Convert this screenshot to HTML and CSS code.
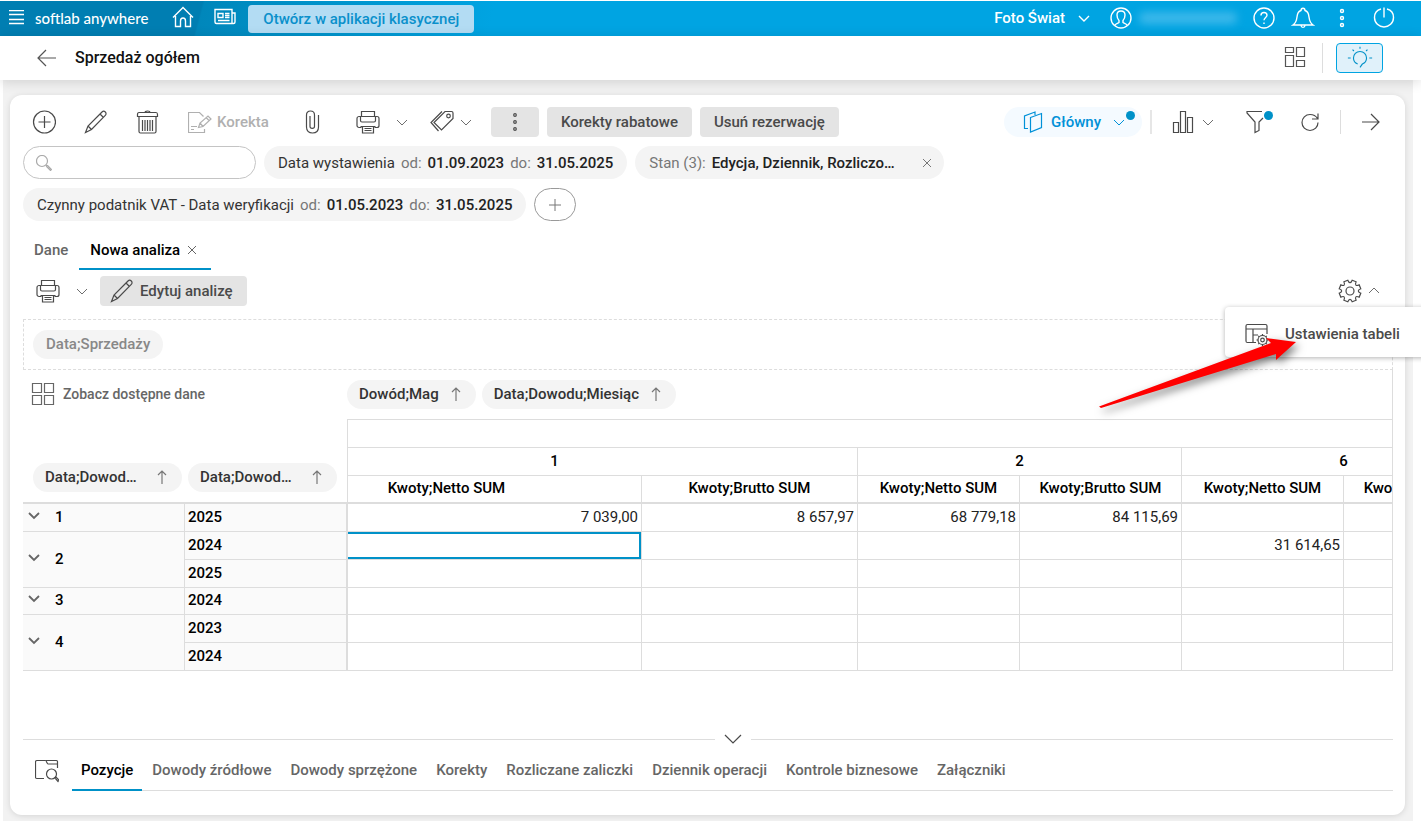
FILE: index.html
```html
<!DOCTYPE html>
<html lang="pl">
<head>
    <meta charset="UTF-8">
    <meta name="viewport" content="width=device-width, initial-scale=1.0">
    <title>Sprzedaż ogółem</title>
    <link rel="stylesheet" href="styles.css">
</head>
<body>
    <svg class="sprite" aria-hidden="true">
        <symbol id="chevron" viewBox="0 0 12 12"><path d="M1 4l5 5 5-5"/></symbol>
        <symbol id="close" viewBox="0 0 12 12"><path d="M2 2l8 8M10 2l-8 8"/></symbol>
        <symbol id="arrow-up" viewBox="0 0 12 16"><path d="M6 15V2M2 6l4-4 4 4"/></symbol>
        <symbol id="pencil" viewBox="0 0 24 24"><path d="M1.500 22.500l2.500-6.500L18 2c1-1 2.300-1 3.300 0s1 2.300 0 3.300L7.500 19.500zM4 16l3.500 3.500M16 4l3.500 3.500"/></symbol>
        <symbol id="printer" viewBox="0 0 24 24"><path d="M5.500 6V1.500h13V6M5.500 17.500H3c-1 0-2-1-2-2V8.500c0-1 1-2 2-2h1.500v4c0 .8.700 1.500 1.500 1.500h12c.8 0 1.500-.7 1.500-1.500v-4H21c1 0 2 1 2 2v7c0 1-1 2-2 2h-2.500M4.500 6.500h15M6.500 16.500h11v6.500h-11zM4.500 16.500h15M8.500 18.500h7M8.500 20.500h7"/></symbol>
    </svg>

    <header class="topbar">
        <button class="icon-btn" aria-label="Menu">
            <svg class="icon-16" viewBox="0 0 16 16"><path d="M0 .500h15M0 4.500h15M0 9.500h15M0 13.500h15"/></svg>
        </button>
        <span class="brand">softlab anywhere</span>
        <button class="icon-btn home" aria-label="Start">
            <svg class="icon-24" viewBox="0 0 24 24"><path d="M2 11.500L12 1.500l10 10M4.500 10v10.500h5V15c0-2 1-3 2.500-3s2.500 1 2.500 3v5.500h5V10"/></svg>
        </button>
        <button class="icon-btn news" aria-label="Aktualności">
            <svg class="icon-24" viewBox="0 0 24 24"><path d="M2 3.500h17v14H3.500c-1 0-1.500-.5-1.500-1.500zM19 7h3v9c0 1-.5 1.500-1.500 1.500H19M5 7.500h5v4H5zM12 7.500h4.500M12 9.500h4.500M12 11.500h4.500M5 14.500h11.500"/></svg>
        </button>
        <button class="classic-btn">Otwórz w aplikacji klasycznej</button>
        <div class="topbar-right">
            <button class="company">Foto Świat <svg class="icon-12"><use href="#chevron"/></svg></button>
            <button class="icon-btn user" aria-label="Użytkownik">
                <svg class="icon-24" viewBox="0 0 24 24"><circle cx="12" cy="12" r="10"/><path d="M5.500 19.500c1-2 3-2 4.500-3v-2C8.500 13 8 11 8 9c0-2.500 1.500-4 4-4s4 1.500 4 4c0 2-.5 4-2 5.500v2c1.500 1 3.500 1 4.500 3"/></svg>
                <span class="user-name"></span>
            </button>
            <button class="icon-btn" aria-label="Pomoc">
                <svg class="icon-24" viewBox="0 0 24 24"><circle cx="12" cy="12" r="10"/><path d="M9 9.500C9 7.500 10.200 6.500 12 6.500s3 1 3 2.800c0 2.200-3 2.200-3 5M12 16.500v1.500"/></svg>
            </button>
            <button class="icon-btn bell" aria-label="Powiadomienia">
                <svg class="icon-24" viewBox="0 0 24 24"><path d="M2 19h20c-3-2-3.500-4-4-8-.4-4-2-6-4-6.500 0-3-4-3-4 0C8 5 6.400 7 6 11c-.5 4-1 6-4 8zM10 19.500c.3 2.500 3.700 2.500 4 0"/></svg>
            </button>
            <button class="icon-btn" aria-label="Więcej">
                <svg class="icon-24" viewBox="0 0 24 24"><circle cx="12" cy="5" r="1.500"/><circle cx="12" cy="12" r="1.500"/><circle cx="12" cy="19" r="1.500"/></svg>
            </button>
            <button class="icon-btn power" aria-label="Wyloguj">
                <svg class="icon-24" viewBox="0 0 24 24"><path d="M9 3c-4 1-6.500 4.500-6.500 8.500 0 5.500 4.500 9.500 9.500 9.500s9.500-4 9.500-9.500C21.500 7.500 19 4 15 3M12 1.500v10"/></svg>
            </button>
        </div>
    </header>

    <div class="page-head">
        <button class="icon-btn back" aria-label="Wstecz">
            <svg class="icon-24" viewBox="0 0 24 24"><path d="M21 12H3M11 4l-8 8 8 8"/></svg>
        </button>
        <h1>Sprzedaż ogółem</h1>
        <button class="icon-btn layout" aria-label="Układ">
            <svg class="icon-24" viewBox="0 0 24 24"><path d="M2.500 1.500h8v5h-8zM13.500 1.500h8v9h-8zM2.500 9.500h8v11h-8zM13.500 14.500h8v6h-8z"/></svg>
        </button>
        <button class="tips" aria-label="Wskazówki">
            <svg class="tips-icon" viewBox="0 0 30 24"><path d="M12.500 18.500c-2.500-1-4.500-3.500-4.500-6.500 0-4 3-7 7-7s7 3 7 7c0 3-2 5.500-4.500 6.500L15 22M15 0v2M7 3l1.500 1.500M23 3l-1.500 1.500M2 12h3M25 12h3"/></svg>
        </button>
    </div>

    <main class="workspace">
        <div class="card">
            <div class="toolbar">
                <div class="tools">
                    <button class="icon-btn" aria-label="Dodaj">
                        <svg class="icon-24" viewBox="0 0 24 24"><circle cx="12.500" cy="12" r="11"/><path d="M12.500 6v12M6.500 12h12"/></svg>
                    </button>
                    <button class="icon-btn" aria-label="Edytuj"><svg class="icon-24"><use href="#pencil"/></svg></button>
                    <button class="icon-btn" aria-label="Usuń">
                        <svg class="icon-24" viewBox="0 0 24 24"><path d="M9 2.500c0-2 5-2 5 0M3 2.500h17c1 0 1.500 1 1.500 2v2h-20v-2c0-1 .5-2 1.500-2zM3 6.500v15c0 1 .5 1.500 1.500 1.500h14c1 0 1.500-.5 1.500-1.500v-15M6.500 10v11M9 10v11M11.500 10v11M14 10v11M16.500 10v11"/></svg>
                    </button>
                    <button class="icon-btn korekta" disabled>
                        <svg class="icon-24" viewBox="0 0 24 24"><path d="M16.500 19v3.500H.500v-20h11l4 4M3 16.500h6M3 19.500h3M10.500 17.500l1.500-4.500 8-7 3 3-8 7.500zM12 13l3 3.500M18 7.500l3 3"/></svg>
                        Korekta
                    </button>
                </div>
                <button class="icon-btn attach" aria-label="Załącz">
                    <svg class="icon-24" viewBox="0 0 24 24"><path d="M18.500 5v12c0 4-2.500 6-6 6s-6-2-6-6V5c0-2.500 1.500-4 4-4s4 1.500 4 4v11.500c0 2.500-4.500 2.500-4.500 0V6"/></svg>
                </button>
                <button class="icon-btn print" aria-label="Drukuj">
                    <svg class="icon-24"><use href="#printer"/></svg>
                    <svg class="icon-12"><use href="#chevron"/></svg>
                </button>
                <button class="icon-btn tags" aria-label="Etykiety">
                    <svg class="icon-24" viewBox="0 0 24 24"><path d="M15 1.500h6.500c1 0 1.500.5 1.500 1.500v5.500L11.500 20 4 12.500zM12 1.500l-11 11L8.500 21"/><circle cx="18.500" cy="6" r="1.800"/></svg>
                    <svg class="icon-12"><use href="#chevron"/></svg>
                </button>
                <div class="actions">
                    <button class="btn btn-more" aria-label="Więcej">
                        <svg class="icon-24" viewBox="0 0 24 24"><circle cx="12" cy="5" r="1.300"/><circle cx="12" cy="12" r="1.300"/><circle cx="12" cy="19" r="1.300"/></svg>
                    </button>
                    <button class="btn">Korekty rabatowe</button>
                    <button class="btn">Usuń rezerwację</button>
                </div>
                <div class="tools-right">
                    <button class="view-btn">
                        <svg class="icon-24" viewBox="0 0 24 24"><path d="M9.500 7.500l11-4v14l-11 4.500zM7 18.500H3.500V6l10.500-4v3"/></svg>
                        Główny
                        <svg class="icon-12"><use href="#chevron"/></svg>
                        <span class="dot"></span>
                    </button>
                    <button class="icon-btn chart" aria-label="Wykresy">
                        <svg class="icon-24" viewBox="0 0 24 24"><path d="M1.500 12.500h5v10h-5zM8.500 1.500h5v21h-5zM15.500 7.500h5v15h-5z"/></svg>
                        <svg class="icon-12"><use href="#chevron"/></svg>
                    </button>
                    <button class="icon-btn filter" aria-label="Filtr">
                        <svg class="icon-24" viewBox="0 0 24 24"><path d="M16 1.500H1V3l8 9v10.500l4-2V12l4-4"/></svg>
                        <span class="dot"></span>
                    </button>
                    <button class="icon-btn" aria-label="Odśwież">
                        <svg class="icon-24" viewBox="0 0 24 24"><path d="M20 12.500c0 4.500-3.500 8-8 8s-8-3.500-8-8 3.500-8 8-8c3.500 0 6 1.500 7.500 4M20 3.500v5.500h-6"/></svg>
                    </button>
                    <button class="icon-btn next" aria-label="Dalej">
                        <svg class="icon-24" viewBox="0 0 24 24"><path d="M3 12h17M12 4l8 8-8 8"/></svg>
                    </button>
                </div>
            </div>

            <div class="filters">
                <label class="search">
                    <svg class="icon-16" viewBox="0 0 16 16"><circle cx="6" cy="6" r="5.500"/><path d="M10 10l1.500 1.500M11.500 10.500l4 4-1 1-4-4z"/></svg>
                    <input type="text" aria-label="Szukaj">
                </label>
                <button class="pill">Data wystawienia <span>od:</span> <b>01.09.2023</b> <span>do:</span> <b>31.05.2025</b></button>
                <button class="pill pill-state"><span>Stan (3):</span> <b>Edycja, Dziennik, Rozliczo…</b> <svg class="icon-12"><use href="#close"/></svg></button>
                <button class="pill">Czynny podatnik VAT - Data weryfikacji <span>od:</span> <b>01.05.2023</b> <span>do:</span> <b>31.05.2025</b></button>
                <button class="pill-add" aria-label="Dodaj filtr">
                    <svg class="icon-12" viewBox="0 0 12 12"><path d="M6 0v12M0 6h12"/></svg>
                </button>
            </div>

            <div class="tabs">
                <button class="tab">Dane</button>
                <button class="tab active">Nowa analiza <svg class="icon-12"><use href="#close"/></svg></button>
            </div>

            <div class="analysis-bar">
                <button class="icon-btn print-analysis" aria-label="Drukuj analizę">
                    <svg class="icon-24"><use href="#printer"/></svg>
                    <svg class="icon-12"><use href="#chevron"/></svg>
                </button>
                <button class="btn btn-edit"><svg class="icon-24"><use href="#pencil"/></svg> Edytuj analizę</button>
                <div class="settings">
                    <button class="icon-btn" aria-label="Ustawienia">
                        <svg class="icon-24" viewBox="0 0 24 24"><circle cx="12" cy="12" r="4"/><path d="M22.800 14.200L21.200 18.100Q18.500 17 17.900 17.900Q17 18.500 18.100 21.200L14.200 22.800Q13.200 20.300 12 20.300Q10.800 20.300 9.800 22.800L5.900 21.200Q7 18.500 6.100 17.900Q5.500 17 2.800 18.100L1.200 14.200Q3.700 13.200 3.700 12Q3.700 10.800 1.200 9.800L2.800 5.900Q5.500 7 6.100 6.100Q7 5.500 5.900 2.800L9.800 1.200Q10.800 3.700 12 3.700Q13.200 3.700 14.200 1.200L18.100 2.800Q17 5.500 17.900 6.100Q18.500 7 21.200 5.900L22.800 9.800Q20.300 10.800 20.300 12Q20.300 13.200 22.800 14.200z"/></svg>
                        <svg class="icon-12 up"><use href="#chevron"/></svg>
                    </button>
                    <div class="menu">
                        <button class="menu-item">
                            <svg class="icon-24" viewBox="0 0 24 24"><path d="M11 20.500H2.500c-1 0-1.500-.5-1.500-1.500V4c0-1 .5-1.500 1.500-1.500h18c1 0 1.500.5 1.500 1.500v8M1 7h21M8 7v13.500M8 13h5"/><circle cx="17.500" cy="18" r="4.500"/><circle cx="17.500" cy="18" r="1.800"/><path d="M17.500 12v1.500M17.500 22.500V24M11.500 18H13M22 18h1.500M13.300 13.800l1 1M20.700 21.200l1 1M13.300 22.200l1-1M20.700 14.800l1-1"/></svg>
                            Ustawienia tabeli
                        </button>
                    </div>
                    <svg class="pointer" viewBox="0 0 200 70" aria-hidden="true"><polygon points="0,66.500 172,3 167,-2 197,2 177,20 177,14 2,68"/></svg>
                </div>
            </div>

            <div class="filter-zone">
                <span class="chip chip-muted">Data;Sprzedaży</span>
            </div>

            <div class="pivot">
                <div class="pivot-fields">
                    <button class="show-fields">
                        <svg class="icon-24" viewBox="0 0 24 24"><path d="M1.500 1.500h9v9h-9zM13.500 1.500h9v9h-9zM1.500 13.500h9v9h-9zM13.500 13.500h9v9h-9z"/></svg>
                        Zobacz dostępne dane
                    </button>
                    <button class="chip">Dowód;Mag <svg class="sort"><use href="#arrow-up"/></svg></button>
                    <button class="chip">Data;Dowodu;Miesiąc <svg class="sort"><use href="#arrow-up"/></svg></button>
                </div>
                <table class="grid">
                    <colgroup>
                        <col class="c-row"><col class="c-year"><col class="c-wide"><col class="c-mid"><col class="c-val"><col class="c-val"><col class="c-val"><col class="c-val">
                    </colgroup>
                    <thead>
                        <tr>
                            <td class="corner" colspan="2" rowspan="3">
                                <div class="row-fields">
                                    <button class="chip">Data;Dowod… <svg class="sort"><use href="#arrow-up"/></svg></button>
                                    <button class="chip">Data;Dowod… <svg class="sort"><use href="#arrow-up"/></svg></button>
                                </div>
                            </td>
                            <th class="top" colspan="6"></th>
                        </tr>
                        <tr>
                            <th class="shifted" colspan="2">1</th>
                            <th colspan="2">2</th>
                            <th colspan="2">6</th>
                        </tr>
                        <tr class="measures">
                            <th class="shifted">Kwoty;Netto SUM</th>
                            <th>Kwoty;Brutto SUM</th>
                            <th>Kwoty;Netto SUM</th>
                            <th>Kwoty;Brutto SUM</th>
                            <th>Kwoty;Netto SUM</th>
                            <th>Kwoty;Brutto SUM</th>
                        </tr>
                    </thead>
                    <tbody>
                        <tr>
                            <th class="row-head"><button aria-label="Rozwiń"><svg class="icon-12"><use href="#chevron"/></svg></button>1</th>
                            <th class="year">2025</th>
                            <td>7 039,00</td><td>8 657,97</td><td>68 779,18</td><td>84 115,69</td><td></td><td></td>
                        </tr>
                        <tr>
                            <th class="row-head" rowspan="2"><button aria-label="Rozwiń"><svg class="icon-12"><use href="#chevron"/></svg></button>2</th>
                            <th class="year">2024</th>
                            <td class="selected"></td><td></td><td></td><td></td><td>31 614,65</td><td></td>
                        </tr>
                        <tr>
                            <th class="year">2025</th>
                            <td></td><td></td><td></td><td></td><td></td><td></td>
                        </tr>
                        <tr class="single">
                            <th class="row-head"><button aria-label="Rozwiń"><svg class="icon-12"><use href="#chevron"/></svg></button>3</th>
                            <th class="year">2024</th>
                            <td></td><td></td><td></td><td></td><td></td><td></td>
                        </tr>
                        <tr>
                            <th class="row-head" rowspan="2"><button aria-label="Rozwiń"><svg class="icon-12"><use href="#chevron"/></svg></button>4</th>
                            <th class="year">2023</th>
                            <td></td><td></td><td></td><td></td><td></td><td></td>
                        </tr>
                        <tr>
                            <th class="year">2024</th>
                            <td></td><td></td><td></td><td></td><td></td><td></td>
                        </tr>
                    </tbody>
                </table>
            </div>

            <div class="details">
                <div class="splitter">
                    <button class="icon-btn" aria-label="Zwiń">
                        <svg viewBox="0 0 18 10"><path d="M1 1l8 8 8-8"/></svg>
                    </button>
                </div>
                <div class="details-bar">
                    <button class="icon-btn" aria-label="Podgląd">
                        <svg class="icon-24" viewBox="0 0 24 24"><path d="M9 19.500H2c-1 0-1.500-.5-1.500-1.500V3c0-.8.500-1.500 1.500-1.500h8.500c1 0 1.500 3.500 2.500 3.500h9.500v4M11 1.500h10.500c.6 0 1 .4 1 1V5"/><circle cx="16.500" cy="15" r="5"/><path d="M20 19l1-1 3 3-1 1.500z"/></svg>
                    </button>
                    <div class="detail-tabs">
                        <button class="tab active">Pozycje</button>
                        <button class="tab">Dowody źródłowe</button>
                        <button class="tab">Dowody sprzężone</button>
                        <button class="tab">Korekty</button>
                        <button class="tab">Rozliczane zaliczki</button>
                        <button class="tab">Dziennik operacji</button>
                        <button class="tab">Kontrole biznesowe</button>
                        <button class="tab">Załączniki</button>
                    </div>
                </div>
            </div>
        </div>
    </main>
</body>
</html>
```
FILE: styles.css
```css
* {
    box-sizing: border-box;
}
body {
    margin: 0;
    padding-top: 1px;
    overflow-x: hidden;
    background-color: #fff;
    color: #333;
    font-family: Roboto, "Open Sans", sans-serif;
    font-size: 15px;
    line-height: 20px;
}
button {
    display: flex;
    align-items: center;
    padding: 0;
    border: 0;
    background: none;
    color: inherit;
    font: inherit;
    font-weight: 500;
    white-space: nowrap;
    cursor: pointer;
}
svg {
    display: block;
    flex: none;
    fill: none;
    stroke: currentColor;
    stroke-width: 1.2;
}
.sprite {
    display: none;
}
.icon-24 {
    width: 24px;
    height: 24px;
}
.icon-16 {
    width: 16px;
    height: 16px;
}
.icon-12 {
    width: 12px;
    height: 12px;
    stroke-width: 1;
}
.icon-btn .icon-12 {
    opacity: 0.8;
}
.dot {
    position: absolute;
    top: 4px;
    right: 7px;
    width: 9px;
    height: 9px;
    border-radius: 50%;
    background-color: #0091c8;
}

/* top bar */
.topbar {
    display: flex;
    align-items: center;
    height: 35px;
    padding: 0 25px 2px 9px;
    background: linear-gradient(105deg, #007eb2 0, #007eb2 196px, #0087bb 198px, #00a4e2 480px);
    color: #fff;
}
.topbar svg {
    stroke-width: 1.4;
}
.brand {
    margin-left: 10px;
    font-family: Lato, sans-serif;
    font-size: 15px;
    font-weight: 500;
}
.home {
    margin-left: 23px;
}
.news {
    margin-left: 18px;
}
.classic-btn {
    height: 28px;
    margin-top: 2px;
    margin-left: 11px;
    padding: 0 15px;
    border-radius: 4px;
    background-color: #b3dcf3;
    color: #0a90cb;
}
.topbar-right {
    display: flex;
    align-items: center;
    gap: 15px;
    margin-left: auto;
}
.company {
    gap: 13px;
    margin-right: 4px;
}
.user {
    gap: 6px;
}
.user-name {
    width: 98px;
    height: 12px;
    border-radius: 5px;
    background-color: #3cb8ea;
    filter: blur(4px);
}
.power {
    margin-left: 3px;
}

/* page header */
.page-head {
    position: relative;
    display: flex;
    align-items: center;
    height: 44px;
    padding: 0 38px 0 35px;
    background-color: #fff;
    box-shadow: 0 2px 12px rgba(0, 0, 0, 0.14);
    color: #555;
}
.page-head h1 {
    margin: 0 auto 0 16px;
    color: #111;
    font-size: 16px;
    font-weight: 500;
}
.layout {
    padding-right: 15px;
    border-right: 1px solid #ddd;
    height: 30px;
}
.tips {
    justify-content: center;
    width: 47px;
    height: 30px;
    margin-left: 13px;
    border: 1px solid #00a4e2;
    border-radius: 4px;
    background-color: #e0f1fa;
    color: #0091c8;
}
.tips-icon {
    width: 28px;
    height: 24px;
}

/* main card */
.workspace {
    margin-right: 8px;
    margin-left: 3px;
    padding: 15px 8px 6px 7px;
    background-color: #f2f2f2;
}
.card {
    display: flex;
    flex-direction: column;
    min-height: calc(100vh - 101px);
    padding: 12px 12px 24px 13px;
    border-radius: 12px;
    background-color: #fff;
    box-shadow: 0 1px 6px rgba(0, 0, 0, 0.12);
    color: #4a4a4a;
}
.toolbar {
    display: flex;
    align-items: center;
    height: 30px;
    padding-left: 9px;
}
.tools {
    display: flex;
    gap: 28px;
}
.korekta {
    gap: 5px;
    color: #b0b0b0;
}
.attach {
    margin-left: 31px;
}
.print {
    gap: 16px;
    margin-left: 32px;
}
.tags {
    gap: 6px;
    margin-left: 22px;
}
.actions {
    display: flex;
    gap: 8px;
    margin-left: 19px;
}
.btn {
    height: 30px;
    padding: 0 14px;
    border-radius: 4px;
    background-color: #e4e4e4;
}
.btn-more {
    justify-content: center;
    width: 48px;
}
.tools-right {
    display: flex;
    align-items: center;
    margin-left: auto;
    padding-right: 10px;
}
.view-btn {
    position: relative;
    height: 30px;
    gap: 6px;
    margin-right: 8px;
    padding: 0 17px 0 17px;
    border-radius: 15px;
    background-color: #f4faff;
    color: #0091d8;
}
.view-btn .icon-12 {
    margin-left: 6px;
}
.chart {
    gap: 6px;
    padding-left: 20px;
    border-left: 2px solid #e6e6e6;
}
.filter {
    position: relative;
    width: 32px;
    height: 30px;
    margin: 0 20px 0 32px;
}
.filter .dot {
    right: 5px;
}
.next {
    margin-left: 18px;
    padding-left: 18px;
    border-left: 1px solid #ddd;
}

/* filters */
.filters {
    display: flex;
    flex-wrap: wrap;
    gap: 9px 8px;
    margin-top: 9px;
}
.search {
    display: flex;
    align-items: center;
    gap: 8px;
    width: 233px;
    height: 33px;
    padding: 0 12px;
    border: 1px solid #c4c4c4;
    border-radius: 17px;
    color: #aaa;
}
.search input {
    flex: 1;
    min-width: 0;
    border: 0;
    outline: 0;
    background: none;
    font: inherit;
}
.pill {
    gap: 6px;
    height: 33px;
    padding: 0 14px;
    border-radius: 17px;
    background-color: #f4f4f4;
    color: #333;
    font-weight: 400;
}
.pill span {
    color: #777;
}
.pill b {
    color: #222;
    font-weight: 500;
}
.pill-state .icon-12 {
    margin-left: 20px;
    margin-right: -3px;
    color: #777;
}
.pill-add {
    justify-content: center;
    width: 42px;
    height: 33px;
    border: 1px solid #999;
    border-radius: 17px;
    color: #777;
}

/* tabs */
.tabs {
    display: flex;
    margin-top: 11px;
}
.tab {
    gap: 6px;
    height: 38px;
    padding: 0 11px;
    border-bottom: 2px solid transparent;
    color: #666;
}
.tab.active {
    border-bottom-color: #0091c8;
    color: #000;
}
.tab .icon-12 {
    margin-right: 2px;
    color: #666;
}

/* analysis */
.analysis-bar {
    display: flex;
    align-items: center;
    margin-top: 6px;
    padding: 0 13px;
}
.print-analysis {
    gap: 16px;
    margin-right: 12px;
}
.btn-edit {
    gap: 6px;
    padding: 0 14px 0 10px;
}
.settings {
    position: relative;
    margin-left: auto;
}
.settings .icon-btn {
    gap: 6px;
}
.up {
    transform: rotate(180deg);
}
.menu {
    position: absolute;
    z-index: 1;
    top: 28px;
    left: -113px;
    width: 200px;
    padding: 9px 0 7px;
    border-radius: 4px 0 0 4px;
    background-color: #fff;
    box-shadow: 0 1px 5px rgba(0, 0, 0, 0.3);
}
.menu-item {
    width: 100%;
    height: 34px;
    gap: 16px;
    padding: 2px 0 0 20px;
}
.pointer {
    position: absolute;
    z-index: 2;
    top: 61px;
    left: -239px;
    width: 200px;
    height: 70px;
    overflow: visible;
    fill: #f00;
    stroke: none;
    filter: drop-shadow(3px 4px 4px rgba(0, 0, 0, 0.5));
}
.filter-zone {
    display: flex;
    align-items: center;
    height: 51px;
    margin-top: 13px;
    padding-left: 9px;
    border: 1px dashed #ddd;
}
.chip {
    display: flex;
    align-items: center;
    gap: 11px;
    height: 29px;
    padding: 0 14px 2px 12px;
    border-radius: 15px;
    background-color: #f4f4f4;
    color: #333;
    font-weight: 500;
}
.chip-muted {
    padding-right: 13px;
    padding-left: 13px;
    color: #888;
}
.sort {
    width: 12px;
    height: 16px;
    color: #777;
}
.pivot {
    overflow: hidden;
    border-right: 1px solid #ddd;
}
.pivot-fields {
    display: flex;
    align-items: center;
    gap: 6px;
    height: 49px;
}
.show-fields {
    width: 318px;
    gap: 8px;
    padding: 0 0 2px 8px;
    color: #666;
    font-size: 14px;
}
.grid {
    width: 1483px;
    border-spacing: 0;
    table-layout: fixed;
    color: #000;
}
.c-row {
    width: 162px;
}
.c-year {
    width: 163px;
}
.c-wide {
    width: 294px;
}
.c-mid {
    width: 216px;
}
.c-val {
    width: 162px;
}
.grid th,
.grid td {
    height: 28px;
    padding: 0 3px 2px;
    border-right: 1px solid #ddd;
    border-bottom: 1px solid #ddd;
    font-weight: 500;
    text-align: center;
}
.grid tbody td {
    color: #222;
    font-weight: 400;
    text-align: right;
}
.grid .single th,
.grid .single td {
    height: 27px;
}
.grid .top {
    height: 29px;
    border-top: 1px solid #ddd;
}
.grid .shifted {
    padding-right: 99px;
}
.grid .measures th,
.grid .corner {
    border-bottom-width: 2px;
}
.grid .corner {
    padding: 0 10px 10px;
    vertical-align: bottom;
}
.row-fields {
    display: flex;
    gap: 6px;
}
.row-fields .chip {
    flex: 1;
    justify-content: space-between;
}
.grid .row-head,
.grid .year {
    background-color: #fafafa;
    text-align: left;
}
.grid .year {
    border-right-width: 2px;
}
.row-head button {
    float: left;
    height: 16px;
    padding: 0 15px 0 2px;
    color: #666;
}
.row-head .icon-12 {
    stroke-width: 1.8;
}
.grid .selected {
    box-shadow: inset 0 2px #0091c8, inset 0 -2px #0091c8, inset -2px 0 #0091c8;
}

/* details */
.details {
    margin-top: auto;
}
.splitter {
    display: flex;
    align-items: center;
    gap: 9px;
    height: 22px;
}
.splitter::before,
.splitter::after {
    content: "";
    flex: 1 1 0;
    height: 1px;
    background-color: #ddd;
}
.splitter::before {
    flex-basis: 50px;
}
.splitter svg {
    width: 18px;
    height: 10px;
}
.details-bar {
    display: flex;
    align-items: center;
    padding-left: 12px;
}
.detail-tabs {
    display: flex;
    flex: 1;
    gap: 1px;
    margin-left: 13px;
    box-shadow: inset 0 -1px #ddd;
}
.detail-tabs .tab {
    height: 41px;
    padding: 0 9px;
}
```
